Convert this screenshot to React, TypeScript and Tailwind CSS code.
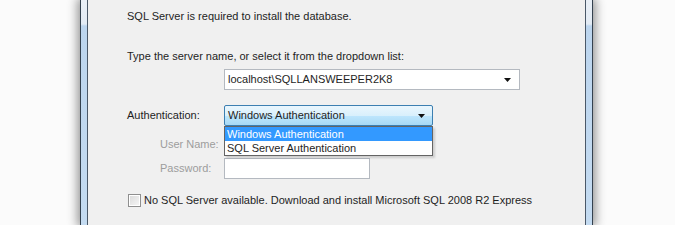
import React from "react";

function Arrow() {
  return (
    <svg width="7" height="4" viewBox="0 0 7 4" className="block">
      <path d="M0 0h7L3.5 4z" fill="#111" />
    </svg>
  );
}

export default function App() {
  return (
    <div className="flex h-[225px] w-[675px] overflow-hidden bg-[#fbfbfb] font-['Liberation_Sans',Arial,sans-serif] text-[11px] text-[#1e1e1e]">
      <div className="w-[80px] shrink-0" />
      <div className="flex w-[513px] shrink-0 border-x border-[#34414f] bg-[linear-gradient(to_bottom,#e9eff6_0px,#e3ebf4_24px,#bcd5ee_26px,#c4dbf1_100%)] px-[6px] shadow-[0_0_10px_2px_rgba(0,0,0,0.45)]">
        <div className="flex-1 border-x border-[#4a5868] bg-[#f0f0f0] pl-[39px] pt-[10px]">
          <p className="leading-[13px]">SQL Server is required to install the database.</p>
          <p className="mt-[27px] leading-[13px]">Type the server name, or select it from the dropdown list:</p>

          <div className="mt-[6px] ml-[97px] flex h-[21px] w-[296px] items-center justify-between border border-[#b4b9c0] bg-white pl-[3px] pr-[8px]">
            <span>localhost\SQLLANSWEEPER2K8</span>
            <Arrow />
          </div>

          <div className="mt-[15px] grid grid-cols-[97px_1fr] items-center">
            <span>Authentication:</span>
            <div className="relative w-[209px]">
              <div className="flex h-[21px] items-center justify-between rounded-[2px] border border-[#3c7fb1] bg-[linear-gradient(to_bottom,#eaf6fd,#d9f0fc_50%,#bee6fd_51%,#a7d9f5)] pl-[3px] pr-[7px]">
                <span>Windows Authentication</span>
                <Arrow />
              </div>
              <div className="absolute left-0 top-[21px] z-10 w-[209px] border border-[#646464] bg-white shadow-[2px_2px_2px_rgba(0,0,0,0.15)]">
                <div className="h-[14px] bg-[#3399ff] pl-[2px] leading-[14px] text-white">Windows Authentication</div>
                <div className="h-[14px] pl-[2px] leading-[14px]">SQL Server Authentication</div>
              </div>
            </div>
          </div>

          <div className="mt-[8px] grid grid-cols-[97px_1fr] items-center gap-y-[3px] text-[#9d9d9d]">
            <span className="pl-[33px]">User Name:</span>
            <div className="h-[21px] w-[146px] border border-[#c5c9cf] bg-white" />
            <span className="pl-[33px]">Password:</span>
            <div className="h-[21px] w-[146px] border border-[#b4b9c0] bg-white" />
          </div>

          <label className="mt-[13px] flex items-center gap-[3px]">
            <span className="ml-[1px] flex h-[13px] w-[13px] items-center justify-center border border-[#8f8f8f] bg-white">
              <span className="h-[9px] w-[9px] bg-[linear-gradient(135deg,#dcdcdc,#f4f4f4)]" />
            </span>
            <span>No SQL Server available. Download and install Microsoft SQL 2008 R2 Express</span>
          </label>
        </div>
      </div>
      <div className="flex-1" />
    </div>
  );
}
